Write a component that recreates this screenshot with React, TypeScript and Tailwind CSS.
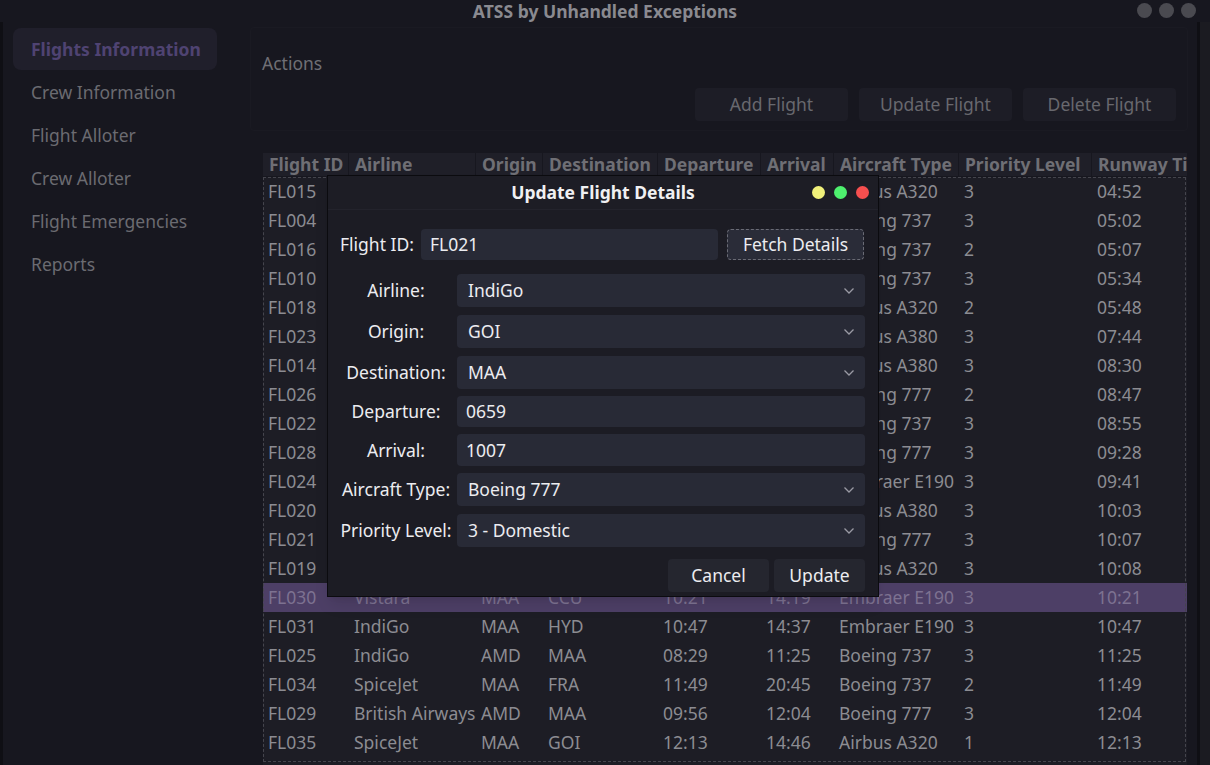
import React from 'react';

type Row = [string, string, string, string, string, string, string, string, string];

const ROWS: Row[] = [
  ['FL015', 'Air India', 'DEL', 'BOM', '04:52', '07:05', 'Airbus A320', '3', '04:52'],
  ['FL004', 'IndiGo', 'BLR', 'DEL', '05:02', '07:48', 'Boeing 737', '3', '05:02'],
  ['FL016', 'SpiceJet', 'HYD', 'BOM', '05:07', '06:35', 'Boeing 737', '2', '05:07'],
  ['FL010', 'Vistara', 'DEL', 'CCU', '05:34', '07:50', 'Boeing 737', '3', '05:34'],
  ['FL018', 'IndiGo', 'MAA', 'BLR', '05:48', '06:50', 'Airbus A320', '2', '05:48'],
  ['FL023', 'Emirates', 'BOM', 'DXB', '07:44', '09:40', 'Airbus A380', '3', '07:44'],
  ['FL014', 'Emirates', 'DEL', 'DXB', '08:30', '10:45', 'Airbus A380', '3', '08:30'],
  ['FL026', 'Air India', 'BOM', 'LHR', '08:47', '17:20', 'Boeing 777', '2', '08:47'],
  ['FL022', 'IndiGo', 'GOI', 'BLR', '08:55', '10:05', 'Boeing 737', '3', '08:55'],
  ['FL028', 'Air India', 'DEL', 'MAA', '09:28', '12:10', 'Boeing 777', '3', '09:28'],
  ['FL024', 'Vistara', 'CCU', 'HYD', '09:41', '11:55', 'Embraer E190', '3', '09:41'],
  ['FL020', 'Emirates', 'MAA', 'DXB', '10:03', '13:05', 'Airbus A380', '3', '10:03'],
  ['FL021', 'IndiGo', 'GOI', 'MAA', '06:59', '10:07', 'Boeing 777', '3', '10:07'],
  ['FL019', 'SpiceJet', 'BLR', 'AMD', '10:08', '12:20', 'Airbus A320', '3', '10:08'],
  ['FL030', 'Vistara', 'MAA', 'CCU', '10:21', '14:19', 'Embraer E190', '3', '10:21'],
  ['FL031', 'IndiGo', 'MAA', 'HYD', '10:47', '14:37', 'Embraer E190', '3', '10:47'],
  ['FL025', 'IndiGo', 'AMD', 'MAA', '08:29', '11:25', 'Boeing 737', '3', '11:25'],
  ['FL034', 'SpiceJet', 'MAA', 'FRA', '11:49', '20:45', 'Boeing 737', '2', '11:49'],
  ['FL029', 'British Airways', 'AMD', 'MAA', '09:56', '12:04', 'Boeing 777', '3', '12:04'],
  ['FL035', 'SpiceJet', 'MAA', 'GOI', '12:13', '14:46', 'Airbus A320', '1', '12:13'],
];

const COLUMNS: [string, string][] = [
  ['Flight ID', 'w-[86px]'],
  ['Airline', 'w-[127px]'],
  ['Origin', 'w-[67px]'],
  ['Destination', 'w-[115px]'],
  ['Departure', 'w-[103px]'],
  ['Arrival', 'w-[73px]'],
  ['Aircraft Type', 'w-[125px]'],
  ['Priority Level', 'w-[133px]'],
  ['Runway Time', 'w-[120px]'],
];

const NAV = ['Flights Information', 'Crew Information', 'Flight Alloter', 'Crew Alloter', 'Flight Emergencies', 'Reports'];

const Chevron = () => (
  <svg width="12" height="8" viewBox="0 0 12 8" fill="none">
    <polyline points="1.5,1.5 6,6 10.5,1.5" stroke="#9a9aa4" strokeWidth="1.3" />
  </svg>
);

const Select = ({ value }: { value: string }) => (
  <div className="flex-1 h-[33px] rounded bg-[#282a36] flex items-center justify-between pl-[11px] pr-[10px] text-[#ececf0]">
    <span>{value}</span>
    <Chevron />
  </div>
);

const Input = ({ value, className = '' }: { value: string; className?: string }) => (
  <div className={`rounded bg-[#282a36] flex items-center pl-[9px] text-[#ececf0] ${className}`}>{value}</div>
);

const FormRow = ({ label, children }: { label: string; children: React.ReactNode }) => (
  <div className="flex items-center gap-[5px]">
    <div className="w-[112px] text-center text-[#ececf0] whitespace-nowrap">{label}</div>
    {children}
  </div>
);

const App: React.FC = () => {
  return (
    <div className="w-[1210px] h-[765px] overflow-hidden bg-[#17171f] font-['Noto_Sans',sans-serif] text-[17.5px] relative flex flex-col">
      {/* title bar */}
      <div className="h-[22px] flex items-center relative shrink-0">
        <div className="flex-1 text-center font-bold text-[#8a8a90] leading-[20px]">ATSS by Unhandled Exceptions</div>
        <div className="absolute right-[14px] top-[3px] flex gap-[7px]">
          <span className="w-[15px] h-[15px] rounded-full bg-[#4a4a50]" />
          <span className="w-[15px] h-[15px] rounded-full bg-[#4a4a50]" />
          <span className="w-[15px] h-[15px] rounded-full bg-[#4a4a50]" />
        </div>
      </div>

      <div className="flex flex-1 min-h-0">
        {/* sidebar */}
        <div className="w-[240px] shrink-0 border-l-[3px] border-[#0f0f14] pl-[10px] pr-[23px] pt-[6px] flex flex-col">
          {NAV.map((item, i) => (
            <div key={item} className="h-[43px] flex items-start">
              <div
                className={`w-full h-[42px] flex items-center pl-[18px] rounded-lg whitespace-nowrap ${
                  i === 0 ? 'bg-[#201f2b] text-[#4f4372] font-bold' : 'text-[#6b6b71]'
                }`}
              >
                {item}
              </div>
            </div>
          ))}
        </div>

        {/* main */}
        <div className="flex-1 flex flex-col min-w-0">
          <div className="mt-[5px] ml-[10px] mr-[9px] h-[104px] border border-[#1a1a22] rounded-sm flex flex-col px-[11px]">
            <div className="mt-[27px] text-[#6f6f75] leading-none">Actions</div>
            <div className="mt-[15px] flex justify-end gap-[11px]">
              {['Add Flight', 'Update Flight', 'Delete Flight'].map(b => (
                <div key={b} className="w-[153px] h-[33px] rounded bg-[#1d1d26] flex items-center justify-center text-[#68686e]">
                  {b}
                </div>
              ))}
            </div>
          </div>

          <div className="ml-[23px] mt-[22px] w-[924px] flex-1 overflow-hidden bg-[#1d1d25] flex flex-col">
            <div className="h-[24px] flex shrink-0 bg-[#1f1f28] border-b border-[#17171f]">
              {COLUMNS.map(([name, w]) => (
                <div key={name} className={`${w} shrink-0 pl-[6px] flex items-center font-bold text-[#6f6f75] border-r border-[#17171f] whitespace-nowrap overflow-hidden`}>
                  {name}
                </div>
              ))}
            </div>
            <div className="relative flex-1">
              <div className="pointer-events-none absolute left-0 top-0 w-[923px] h-[585px] border border-dashed border-[#45454d]" />
              {ROWS.map(r => {
                const sel = r[0] === 'FL030';
                return (
                  <div key={r[0]} className={`h-[29px] flex items-center ${sel ? 'bg-[#4d3f66] text-[#7d7291]' : 'text-[#8c8c92]'}`}>
                    {r.map((c, ci) => (
                      <div key={ci} className={`${COLUMNS[ci][1]} shrink-0 pl-[5px] whitespace-nowrap overflow-hidden`}>
                        {c}
                      </div>
                    ))}
                  </div>
                );
              })}
            </div>
          </div>
        </div>

        {/* right strip */}
        <div className="w-[13px] shrink-0 border-l-[3px] border-[#0f0f14] bg-[#1b1b21]" />
      </div>

      {/* modal dialog */}
      <div className="absolute left-[327px] top-[175px] w-[552px] h-[422px] bg-[#1c1c24] border border-[#0b0b0f] shadow-lg flex flex-col">
        <div className="h-[34px] shrink-0 relative flex items-center justify-center border-b border-[#23232c] bg-[#1d1d25]">
          <span className="font-bold text-[#f0f0f2]">Update Flight Details</span>
          <div className="absolute right-[9px] top-[10px] flex gap-[9px]">
            <span className="w-[13px] h-[13px] rounded-full bg-[#f0f07a]" />
            <span className="w-[13px] h-[13px] rounded-full bg-[#4ef06e]" />
            <span className="w-[13px] h-[13px] rounded-full bg-[#f64f4f]" />
          </div>
        </div>

        <div className="flex flex-col pl-[12px] pr-[13px] pt-[19px]">
          <div className="flex items-center">
            <span className="text-[#ececf0] w-[81px] whitespace-nowrap">Flight ID:</span>
            <Input value="FL021" className="w-[297px] h-[31px]" />
            <div className="ml-[9px] w-[137px] h-[31px] rounded-sm bg-[#2a2c38] border border-dashed border-[#6a6b75] flex items-center justify-center text-[#ececf0]">
              Fetch Details
            </div>
          </div>

          <div className="mt-[14px] flex flex-col gap-[8px]">
            <FormRow label="Airline:"><Select value="IndiGo" /></FormRow>
            <FormRow label="Origin:"><Select value="GOI" /></FormRow>
            <FormRow label="Destination:"><Select value="MAA" /></FormRow>
          </div>
          <div className="mt-[7px] flex flex-col gap-[7px]">
            <FormRow label="Departure:"><Input value="0659" className="flex-1 h-[31px]" /></FormRow>
            <FormRow label="Arrival:"><Input value="1007" className="flex-1 h-[32px]" /></FormRow>
          </div>
          <div className="mt-[7px] flex flex-col gap-[8px]">
            <FormRow label="Aircraft Type:"><Select value="Boeing 777" /></FormRow>
            <FormRow label="Priority Level:"><Select value="3 - Domestic" /></FormRow>
          </div>

          <div className="mt-[12px] flex justify-end gap-[5px]">
            <div className="w-[101px] h-[33px] rounded bg-[#25262f] flex items-center justify-center text-[#ececf0]">Cancel</div>
            <div className="w-[91px] h-[33px] rounded bg-[#25262f] flex items-center justify-center text-[#ececf0]">Update</div>
          </div>
        </div>
      </div>
    </div>
  );
};

export default App;
